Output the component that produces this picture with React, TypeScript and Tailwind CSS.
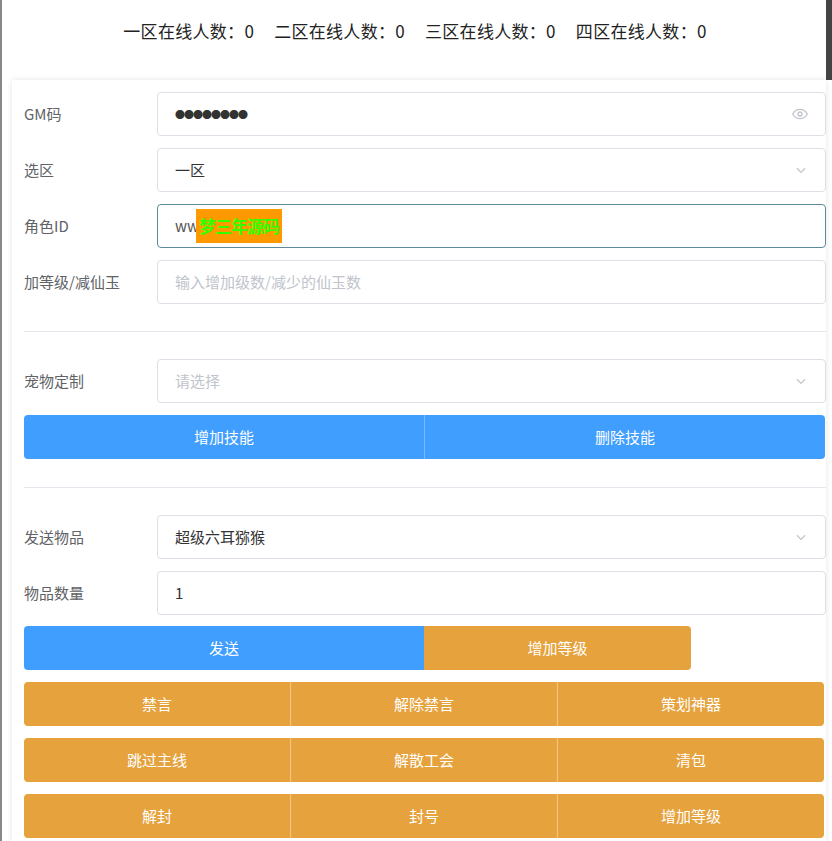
import React from "react";

const font = { fontFamily: '"Noto Sans CJK SC", "Noto Sans", sans-serif' };

function Chevron() {
  return (
    <svg width="14" height="14" viewBox="0 0 24 24" fill="none" stroke="#c0c4cc" strokeWidth="2">
      <path d="M5 9l7 7 7-7" />
    </svg>
  );
}

function Row({ label, children }: { label: string; children: React.ReactNode }) {
  return (
    <div className="flex items-center h-[44px] mb-[12px]">
      <div className="w-[145px] pl-[12px] text-[15px] text-[#606266]">{label}</div>
      {children}
    </div>
  );
}

const boxCls =
  "flex-1 h-[44px] flex items-center justify-between px-[17px] border border-[#dcdfe6] rounded-[4px] text-[15px] bg-white";

export default function App() {
  const grid = [
    ["禁言", "解除禁言", "策划神器"],
    ["跳过主线", "解散工会", "清包"],
    ["解封", "封号", "增加等级"],
  ];
  return (
    <div style={font} className="w-[832px] h-[841px] overflow-hidden bg-white relative border-l-2 border-[#888]">
      <div className="absolute right-0 top-0 w-[6px] h-[80px] bg-[#444]" />
      <div className="h-[80px] flex items-center justify-center gap-[20px] text-[17px] text-[#222] pb-[18px] pr-[4px] tracking-[0.3px]">
        <span>一区在线人数：0</span>
        <span>二区在线人数：0</span>
        <span>三区在线人数：0</span>
        <span>四区在线人数：0</span>
      </div>
      <div className="ml-[10px] mr-[6px] pt-[12px] shadow-[0_0_6px_rgba(0,0,0,0.1)] h-[770px]">
        <Row label="GM码">
          <div className={boxCls}>
            <span className="text-[#333] text-[10px] tracking-[-1px]">●●●●●●●●</span>
            <svg width="16" height="16" viewBox="0 0 24 24" fill="none" stroke="#c0c4cc" strokeWidth="2">
              <path d="M1 12s4-7 11-7 11 7 11 7-4 7-11 7S1 12 1 12z" />
              <circle cx="12" cy="12" r="3" />
            </svg>
          </div>
        </Row>
        <Row label="选区">
          <div className={boxCls}>
            <span className="text-[#333]">一区</span>
            <Chevron />
          </div>
        </Row>
        <Row label="角色ID">
          <div className={boxCls + " !border-[#5b8a9a]"}>
            <span className="flex items-center text-[#555]">
              ww
              <span className="bg-[#ff9900] text-[#33ff00] font-bold text-[17px] tracking-[-1px] ml-[-3px] px-[3px] h-[34px] flex items-center">梦三年源码</span>
            </span>
          </div>
        </Row>
        <Row label="加等级/减仙玉">
          <div className={boxCls}>
            <span className="text-[#c0c4cc]">输入增加级数/减少的仙玉数</span>
          </div>
        </Row>
        <div className="ml-[12px] border-t border-[#e4e7ed] mt-[27px] mb-[27px]" />
        <Row label="宠物定制">
          <div className={boxCls}>
            <span className="text-[#c0c4cc]">请选择</span>
            <Chevron />
          </div>
        </Row>
        <div className="ml-[12px] mr-[1px] flex h-[44px] rounded-[4px] overflow-hidden text-white text-[15px]">
          <div className="flex-1 bg-[#409eff] flex items-center justify-center border-r border-[#7ab8ff]">增加技能</div>
          <div className="flex-1 bg-[#409eff] flex items-center justify-center">删除技能</div>
        </div>
        <div className="ml-[12px] border-t border-[#e4e7ed] mt-[28px] mb-[27px]" />
        <Row label="发送物品">
          <div className={boxCls}>
            <span className="text-[#333]">超级六耳猕猴</span>
            <Chevron />
          </div>
        </Row>
        <Row label="物品数量">
          <div className={boxCls}>
            <span className="text-[#333]">1</span>
          </div>
        </Row>
        <div className="ml-[12px] flex h-[44px] text-white text-[15px] mt-[-1px]">
          <div className="w-[400px] bg-[#409eff] rounded-l-[4px] flex items-center justify-center">发送</div>
          <div className="w-[267px] bg-[#e6a23c] rounded-r-[4px] flex items-center justify-center">增加等级</div>
        </div>
        {grid.map((r, i) => (
          <div key={i} className="ml-[12px] mr-[2px] mt-[12px] flex h-[44px] rounded-[4px] overflow-hidden text-white text-[15px]">
            {r.map((t, j) => (
              <div key={j} className={"flex-1 bg-[#e6a23c] flex items-center justify-center" + (j < 2 ? " border-r border-[#f0c78a]" : "")}>
                {t}
              </div>
            ))}
          </div>
        ))}
      </div>
    </div>
  );
}
